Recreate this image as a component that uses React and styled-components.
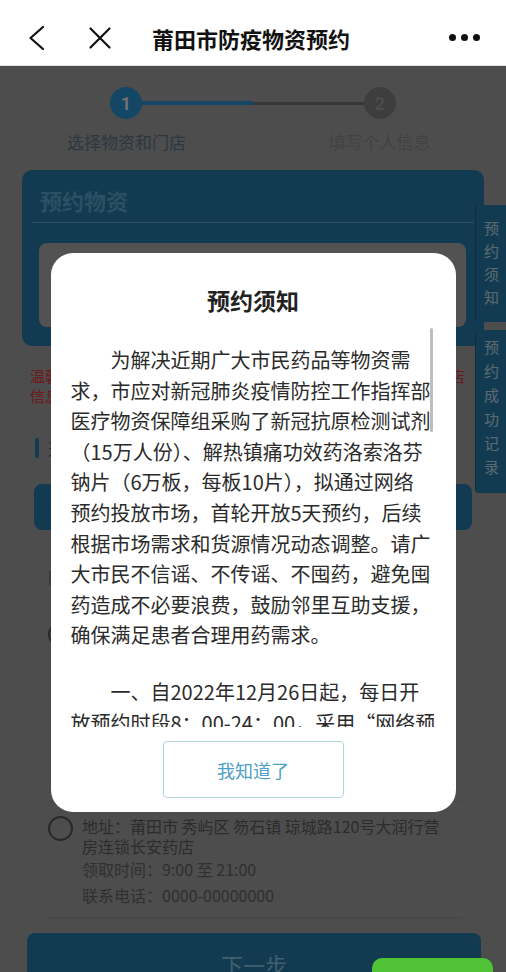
import React from "react";
import styled, { createGlobalStyle } from "styled-components";

const GlobalStyle = createGlobalStyle`
  html, body {
    margin: 0;
    padding: 0;
    overflow: hidden;
  }
  body {
    background: #ababab;
    font-family: "Noto Sans CJK SC", "Noto Sans", sans-serif;
  }
`;

const Page = styled.div`
  width: 506px;
  min-height: 972px;
`;

/* ---------- top nav (outside the webview, not masked) ---------- */

const NavBar = styled.header`
  position: relative;
  z-index: 30;
  height: 66px;
  box-sizing: border-box;
  padding-top: 10px;
  background: #fff;
  border-bottom: 1px solid #e4e4e4;
  display: flex;
  align-items: center;
`;

const NavIcon = styled.svg`
  flex: none;
  margin-left: ${(p) => p.$gap}px;
`;

const NavTitle = styled.h1`
  margin: 0 0 0 40px;
  font-size: 22px;
  line-height: 30px;
  font-weight: 600;
  color: #111;
`;

const MoreDots = styled.div`
  margin-left: auto;
  margin-right: 26px;
  display: flex;
  gap: 5px;
  span {
    width: 7px;
    height: 7px;
    border-radius: 50%;
    background: #111;
  }
`;

/* ---------- steps ---------- */

const Steps = styled.section`
  padding: 21px 0 16px;
`;

const StepTrack = styled.div`
  display: flex;
  align-items: center;
  padding: 0 110px;
`;

const StepDot = styled.div`
  flex: none;
  width: 32px;
  height: 32px;
  border-radius: 50%;
  background: ${(p) => (p.$active ? "#2a9ee0" : "#8a8a8a")};
  color: ${(p) => (p.$active ? "#ffffff" : "#a8a8a8")};
  display: flex;
  align-items: center;
  justify-content: center;
  font: 600 18px "Roboto", sans-serif;
`;

const StepLine = styled.div`
  flex: 1;
  height: ${(p) => (p.$active ? 4 : 3)}px;
  background: ${(p) => (p.$active ? "#2a9ee0" : "#7a7a7a")};
`;

const StepLabels = styled.div`
  display: grid;
  grid-template-columns: 1fr 1fr;
  margin-top: 11px;
`;

const StepLabel = styled.div`
  text-align: center;
  font-size: 17px;
  line-height: 24px;
  color: ${(p) => (p.$active ? "#647a90" : "#939393")};
`;

/* ---------- page body ---------- */

const Card = styled.section`
  margin: 0 22px;
  padding: 15px 10px 19px;
  background: #2883b6;
  border-radius: 10px;
`;

const CardTitle = styled.h2`
  margin: 0;
  padding: 0 8px;
  font-size: 22px;
  line-height: 30px;
  font-weight: 600;
  color: #5fb2dc;
`;

const CardDivider = styled.div`
  height: 1px;
  margin-top: 7px;
  background: #63b4de;
`;

const CardBody = styled.div`
  height: 84px;
  margin: 20px 8px 0 7px;
  border-radius: 8px;
  background: #b6b6b6;
`;

const Notice = styled.p`
  margin: 20px 30px 0;
  font-size: 15px;
  line-height: 20px;
  color: #f43737;
`;

const SectionHead = styled.div`
  margin: 32px 35px 0;
  height: 20px;
  display: flex;
  align-items: center;
  gap: 9px;
  font-size: 16px;
  color: #555;
  &::before {
    content: "";
    width: 4px;
    height: 20px;
    border-radius: 2px;
    background: #2883b6;
  }
`;

const AreaSelect = styled.div`
  margin: 26px 34px 0;
  height: 46px;
  padding: 0 16px;
  border-radius: 8px;
  background: #2883b6;
  color: #cfeeff;
  font-size: 16px;
  display: flex;
  align-items: center;
  justify-content: space-between;
`;

const StoreList = styled.div`
  margin: 16px 34px 0;
`;

const ListHeader = styled.div`
  height: 61.5px;
  padding-left: 14px;
  display: flex;
  align-items: center;
  font-size: 15px;
  color: #6a6a6a;
`;

const StoreItem = styled.label`
  display: flex;
  gap: 9px;
  margin: 0 9px 0 14px;
  padding: 14px 0 9px;
  border-bottom: 1px solid #9c9c9c;
`;

const Radio = styled.span`
  flex: none;
  width: 25px;
  height: 25px;
  box-sizing: border-box;
  border-radius: 50%;
  border: 2px solid #5a5a5a;
`;

const StoreInfo = styled.div`
  flex: 1;
  min-width: 0;
  padding-right: 22px;
`;

const Address = styled.div`
  font-size: 16px;
  line-height: 20px;
  color: #626262;
`;

const InfoRow = styled.div`
  font-size: 16px;
  line-height: 26px;
  color: #6a6a6a;
`;

const NextButton = styled.button`
  display: block;
  width: 454px;
  height: 62px;
  margin: 15px 0 0 27px;
  border: none;
  border-radius: 8px;
  background: #2883b6;
  color: #90d3f4;
  font-family: inherit;
  font-size: 22px;
`;

/* ---------- floating side tabs ---------- */

const SideTabs = styled.aside`
  position: fixed;
  top: 205px;
  right: 0;
  z-index: 5;
  display: flex;
  flex-direction: column;
  gap: 8px;
`;

const SideTab = styled.div`
  width: 31px;
  height: ${(p) => p.$h}px;
  box-sizing: border-box;
  padding-top: ${(p) => p.$top}px;
  background: #2883b6;
  border-left: 1px solid #1d6590;
  border-radius: 4px 0 0 4px;
  writing-mode: vertical-rl;
  line-height: 30px;
  font-size: 15px;
  letter-spacing: ${(p) => p.$spacing}px;
  color: #cdeaf8;
`;

/* ---------- mask + dialog ---------- */

const Mask = styled.div`
  position: fixed;
  top: 66px;
  left: 0;
  right: 0;
  bottom: 0;
  z-index: 10;
  background: rgba(0, 0, 0, 0.55);
  display: flex;
  justify-content: center;
  align-items: flex-start;
  padding-top: 187px;
`;

const Dialog = styled.div`
  width: 405px;
  box-sizing: border-box;
  padding: 31px 0 14px;
  background: #fff;
  border-radius: 22px;
  display: flex;
  flex-direction: column;
  align-items: center;
`;

const DialogTitle = styled.h3`
  margin: 0;
  font-size: 23px;
  line-height: 32px;
  font-weight: 600;
  color: #222;
`;

const NoticeScroll = styled.div`
  position: relative;
  align-self: stretch;
  height: 399px;
  margin: 12px 22px 0 20px;
  padding-top: 17px;
  box-sizing: border-box;
  overflow: hidden;
`;

const ScrollThumb = styled.div`
  position: absolute;
  top: 0;
  right: 1px;
  width: 3px;
  height: 104px;
  border-radius: 2px;
  background: #bdbdbd;
`;

const Para = styled.div`
  & + & {
    margin-top: 26px;
  }
`;

const Line = styled.div`
  padding-left: ${(p) => (p.$indent ? "2em" : "0")};
  white-space: nowrap;
  font-size: 20px;
  line-height: 30.6px;
  color: #2b2b2b;
`;

const ConfirmButton = styled.button`
  width: 181px;
  height: 57px;
  margin-top: 14px;
  background: #fff;
  border: 1px solid #b3d3dc;
  border-radius: 4px;
  color: #4ba0c3;
  font-family: inherit;
  font-size: 18px;
`;

const FloatGreen = styled.div`
  position: fixed;
  right: 13px;
  bottom: -30px;
  z-index: 40;
  width: 121px;
  height: 44px;
  border-radius: 10px;
  background: #4fc236;
`;

const paragraphs = [
  [
    "为解决近期广大市民药品等物资需",
    "求，市应对新冠肺炎疫情防控工作指挥部",
    "医疗物资保障组采购了新冠抗原检测试剂",
    "（15万人份）、解热镇痛功效药洛索洛芬",
    "钠片（6万板，每板10片），拟通过网络",
    "预约投放市场，首轮开放5天预约，后续",
    "根据市场需求和货源情况动态调整。请广",
    "大市民不信谣、不传谣、不囤药，避免囤",
    "药造成不必要浪费，鼓励邻里互助支援，",
    "确保满足患者合理用药需求。",
  ],
  [
    "一、自2022年12月26日起，每日开",
    "放预约时段8：00-24：00，采用“网络预",
    "约+门店领取”的方式进行投放。",
  ],
];

const BackIcon = () => (
  <NavIcon $gap={27} width="20" height="26" viewBox="0 0 20 26">
    <path d="M16 2 L3.5 13 L16 24" fill="none" stroke="#111" strokeWidth="2.2" strokeLinecap="round" strokeLinejoin="round" />
  </NavIcon>
);

const CloseIcon = () => (
  <NavIcon $gap={41} width="24" height="24" viewBox="0 0 24 24">
    <path d="M2.5 2.5 L21.5 21.5 M21.5 2.5 L2.5 21.5" fill="none" stroke="#111" strokeWidth="2.2" strokeLinecap="round" />
  </NavIcon>
);

const Store = ({ address, time, phone, extra }) => (
  <StoreItem>
    <Radio />
    <StoreInfo>
      <Address>{address}</Address>
      <InfoRow>领取时间：{time}</InfoRow>
      <InfoRow>联系电话：{phone}</InfoRow>
      {extra && extra.map((t) => <InfoRow key={t}>{t}</InfoRow>)}
    </StoreInfo>
  </StoreItem>
);

export default function App() {
  return (
    <Page>
      <GlobalStyle />
      <NavBar>
        <BackIcon />
        <CloseIcon />
        <NavTitle>莆田市防疫物资预约</NavTitle>
        <MoreDots>
          <span />
          <span />
          <span />
        </MoreDots>
      </NavBar>

      <Steps>
        <StepTrack>
          <StepDot $active>1</StepDot>
          <StepLine $active />
          <StepLine />
          <StepDot>2</StepDot>
        </StepTrack>
        <StepLabels>
          <StepLabel $active>选择物资和门店</StepLabel>
          <StepLabel>填写个人信息</StepLabel>
        </StepLabels>
      </Steps>

      <Card>
        <CardTitle>预约物资</CardTitle>
        <CardDivider />
        <CardBody />
      </Card>

      <Notice>
        温馨提示：每人每轮限预约一次，请您在预约前仔细核对所选门店信息，预约成功后凭本人身份证到店领取。
      </Notice>

      <SectionHead>选择领取门店</SectionHead>
      <AreaSelect>
        <span>秀屿区</span>
        <span>▾</span>
      </AreaSelect>

      <StoreList>
        <ListHeader>附近门店</ListHeader>
        <Store
          address="地址：莆田市 秀屿区 笏石镇 笏石街128号天天好大药房连锁笏石店"
          time="9:00 至 21:00"
          phone="0000-00000000"
          extra={["剩余数量：充足", "预约状态：可预约", "备注：请按预约时间到店领取"]}
        />
        <Store
          address="地址：莆田市 秀屿区 笏石镇 琼城路120号大润行营房连锁长安药店"
          time="9:00 至 21:00"
          phone="0000-00000000"
        />
      </StoreList>

      <NextButton>下一步</NextButton>

      <SideTabs>
        <SideTab $h={117} $top={16} $spacing={8}>预约须知</SideTab>
        <SideTab $h={163} $top={10} $spacing={9}>预约成功记录</SideTab>
      </SideTabs>

      <Mask>
        <Dialog>
          <DialogTitle>预约须知</DialogTitle>
          <NoticeScroll>
            {paragraphs.map((lines, i) => (
              <Para key={i}>
                {lines.map((text, j) => (
                  <Line key={j} $indent={j === 0}>
                    {text}
                  </Line>
                ))}
              </Para>
            ))}
            <ScrollThumb />
          </NoticeScroll>
          <ConfirmButton>我知道了</ConfirmButton>
        </Dialog>
      </Mask>

      <FloatGreen />
    </Page>
  );
}
